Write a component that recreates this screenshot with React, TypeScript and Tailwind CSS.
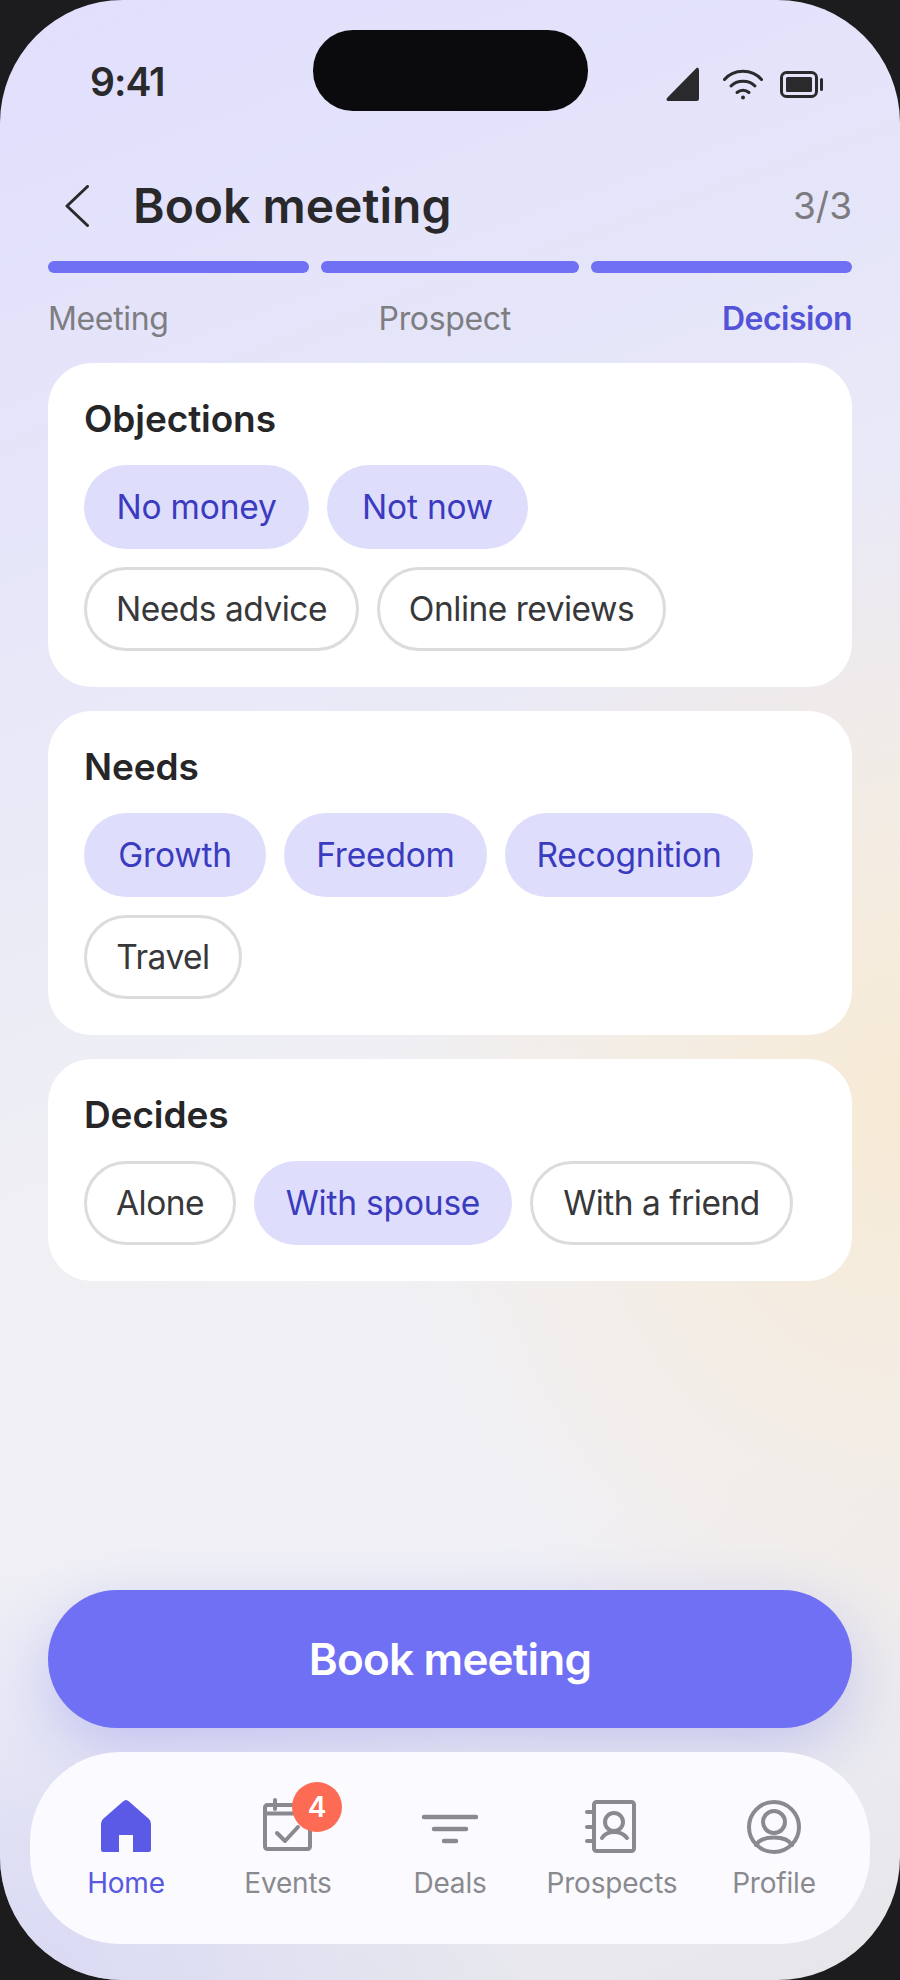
import React from "react";

const font = { fontFamily: "Inter, 'Noto Sans', sans-serif" };

function Chip({ label, on, w }: { label: string; on?: boolean; w: string }) {
  return (
    <div
      className={
        (on
          ? "h-[84px] rounded-full bg-[#dedefc] text-[#3b3bbf] text-[33.5px] tracking-[-0.2px] flex items-center justify-center "
          : "h-[84px] rounded-full border-[3px] border-[#dcdcdc] bg-white text-[#38383a] text-[33.5px] tracking-[-0.5px] flex items-center justify-center ") + w
      }
    >
      {label}
    </div>
  );
}

function Card({ title, chips }: { title: string; chips: [string, boolean, string][] }) {
  return (
    <section className="bg-white rounded-[44px] px-[36px] pt-[34px] pb-[36px]">
      <h2 className="text-[37px] leading-[44px] font-semibold tracking-[-0.1px] text-[#262628] mb-[24px]">{title}</h2>
      <div className="flex flex-wrap gap-[18px]">
        {chips.map(([l, on, w]) => (
          <Chip key={l} label={l} on={on} w={w} />
        ))}
      </div>
    </section>
  );
}

function NavItem({ label, active, children }: { label: string; active?: boolean; children: React.ReactNode }) {
  return (
    <div className="w-[162px] flex flex-col items-center">
      <div className="relative h-[58px] w-[60px]">{children}</div>
      <span className={active ? "mt-[10px] text-[28px] leading-[34px] text-[#5858e0] tracking-[-0.2px]" : "mt-[10px] text-[28px] leading-[34px] text-[#8a8a8e] tracking-[-0.2px]"}>
        {label}
      </span>
    </div>
  );
}

export default function App() {
  return (
    <div className="w-[900px] h-[1980px] bg-[#1c1c1e]" style={font}>
      <div className="relative w-[900px] h-[1980px] rounded-[123px] overflow-hidden flex flex-col bg-[linear-gradient(160deg,#e1dffd_0%,#e6e6f9_25%,#f0f0f4_55%,#f0f0f6_75%,#e6e6ea_100%)]">
        <div className="absolute inset-0 bg-[radial-gradient(ellipse_520px_640px_at_100%_56%,rgba(250,232,200,0.7),rgba(250,232,200,0)_100%)]" />
        <div className="absolute inset-0 bg-[radial-gradient(ellipse_560px_420px_at_0%_100%,rgba(208,208,246,0.7),rgba(208,208,246,0)_100%)]" />
        <div className="relative flex flex-col h-full">
          {/* status bar */}
          <div className="flex items-start h-[111px] pt-[30px]">
            <div className="w-[313px] pl-[90px] pt-[29px] text-[39px] leading-[46px] font-semibold tracking-[-1px] text-[#2a2a2c]">9:41</div>
            <div className="w-[275px] h-[81px] rounded-[40px] bg-[#0b0b0d]" />
            <div className="flex items-center pl-[78px] pt-[37px] gap-[24px]">
              <svg width="33" height="34" viewBox="0 0 33 34">
                <path d="M31 0.5 Q33 0.5 33 3 V31.5 Q33 34 30.5 34 H2.5 Q-0.5 34 1 31 Z" fill="#2a2a2c" />
              </svg>
              <svg width="40" height="31" viewBox="0 0 40 31" fill="none" stroke="#2a2a2c" strokeWidth="3" strokeLinecap="round">
                <path d="M1.5 10.5 C11 -0.5 29 -0.5 38.5 10.5" />
                <path d="M8 17 C14 10.5 26 10.5 32 17" />
                <path d="M14 23.5 C17.5 20.5 22.5 20.5 26 23.5" />
                <circle cx="20" cy="28.5" r="2" fill="#2a2a2c" stroke="none" />
              </svg>
              <svg width="44" height="27" viewBox="0 0 44 27" className="-ml-[7px]">
                <rect x="1.5" y="1.5" width="35" height="24" rx="5" fill="none" stroke="#2a2a2c" strokeWidth="3" />
                <rect x="6" y="6" width="26" height="15" rx="1.5" fill="#2a2a2c" />
                <rect x="40" y="7" width="3" height="13" rx="1.5" fill="#2a2a2c" />
              </svg>
            </div>
          </div>

          {/* header */}
          <div className="flex items-center h-[62px] mt-[64px] pl-[65px] pr-[48px]">
            <svg width="24" height="42" viewBox="0 0 24 42" fill="none" stroke="#2a2a2c" strokeWidth="3" strokeLinecap="round" strokeLinejoin="round">
              <path d="M22.5 1.5 L2 21 L22.5 40.5" />
            </svg>
            <h1 className="ml-[44px] text-[48px] leading-[62px] font-semibold tracking-[0px] text-[#29292b]">Book meeting</h1>
            <span className="ml-auto text-[37px] text-[#7c7c80]">3/3</span>
          </div>

          {/* progress */}
          <div className="flex gap-[12px] mx-[48px] mt-[24px]">
            <div className="h-[12px] w-[261px] rounded-[6px] bg-[#7070f5]" />
            <div className="h-[12px] w-[258px] rounded-[6px] bg-[#7070f5]" />
            <div className="h-[12px] w-[261px] rounded-[6px] bg-[#7070f5]" />
          </div>
          <div className="flex justify-between mx-[48px] mt-[25px] text-[32px] leading-[42px] tracking-[-0.35px]">
            <span className="text-[#7d7d82]">Meeting</span>
            <span className="text-[#7d7d82] pr-[1px]">Prospect</span>
            <span className="text-[#5353d8] font-semibold tracking-[-0.5px]">Decision</span>
          </div>

          {/* cards */}
          <div className="flex flex-col gap-[24px] mx-[48px] mt-[23px]">
            <Card
              title="Objections"
              chips={[
                ["No money", true, "w-[225px]"],
                ["Not now", true, "w-[201px]"],
                ["Needs advice", false, "w-[275px]"],
                ["Online reviews", false, "w-[289px]"],
              ]}
            />
            <Card
              title="Needs"
              chips={[
                ["Growth", true, "w-[182px]"],
                ["Freedom", true, "w-[203px]"],
                ["Recognition", true, "w-[248px]"],
                ["Travel", false, "w-[158px]"],
              ]}
            />
            <Card
              title="Decides"
              chips={[
                ["Alone", false, "w-[152px]"],
                ["With spouse", true, "w-[258px]"],
                ["With a friend", false, "w-[263px]"],
              ]}
            />
          </div>

          {/* CTA */}
          <div className="mt-auto mx-[48px] h-[138px] rounded-full bg-[#7070f5] shadow-[0_20px_60px_rgba(100,100,230,0.28)] flex items-center justify-center text-white text-[44px] font-semibold tracking-[-0.8px]">
            Book meeting
          </div>

          {/* nav */}
          <nav className="mx-[30px] mt-[24px] mb-[36px] h-[192px] rounded-[90px] bg-[#fafaff] pl-[15px] pt-[46px] flex">
            <NavItem label="Home" active>
              <svg width="60" height="58" viewBox="0 0 60 58" className="absolute left-0 top-0">
                <path d="M30 2 Q31.5 2 33 3.5 L53 21 Q55 23 55 26 V51.5 Q55 54 52.5 54 H37 V37 H23 V54 H7.5 Q5 54 5 51.5 V26 Q5 23 7 21 L27 3.5 Q28.5 2 30 2 Z" fill="#5a5ae6" />
              </svg>
            </NavItem>
            <NavItem label="Events">
              <svg width="60" height="58" viewBox="0 0 60 58" className="absolute left-0 top-0" fill="none" stroke="#8a8a8e" strokeWidth="4" strokeLinecap="round" strokeLinejoin="round">
                <rect x="7" y="7" width="45" height="44" rx="2.5" />
                <path d="M7 15.5 H52" />
                <path d="M17 2 V11" />
                <path d="M19 35 L27 43 L40 29" />
              </svg>
              <div className="absolute left-[34px] -top-[16px] w-[50px] h-[50px] rounded-full bg-[#fd6b54] text-white text-[28px] font-semibold flex items-center justify-center">4</div>
            </NavItem>
            <NavItem label="Deals">
              <svg width="60" height="58" viewBox="0 0 60 58" className="absolute left-0 top-0" fill="none" stroke="#8a8a8e" strokeWidth="4.5" strokeLinecap="round">
                <path d="M4 19 H56" />
                <path d="M14 31 H46" />
                <path d="M24 43 H36" />
              </svg>
            </NavItem>
            <NavItem label="Prospects">
              <svg width="60" height="58" viewBox="0 0 60 58" className="absolute left-0 top-0" fill="none" stroke="#8a8a8e" strokeWidth="4" strokeLinecap="round" strokeLinejoin="round">
                <rect x="12" y="4" width="40" height="49" rx="2.5" />
                <path d="M5 14 H10 M5 29 H10 M5 43 H10" />
                <circle cx="32" cy="24" r="9" />
                <path d="M20 40 C25 32 39 32 45 40" />
              </svg>
            </NavItem>
            <NavItem label="Profile">
              <svg width="60" height="58" viewBox="0 0 60 58" className="absolute left-0 top-0" fill="none" stroke="#8a8a8e" strokeWidth="4" strokeLinecap="round">
                <circle cx="30" cy="29" r="25" />
                <circle cx="30" cy="24" r="11" />
                <path d="M12 47 C18 37 42 37 48 47" />
              </svg>
            </NavItem>
          </nav>
        </div>
      </div>
    </div>
  );
}
